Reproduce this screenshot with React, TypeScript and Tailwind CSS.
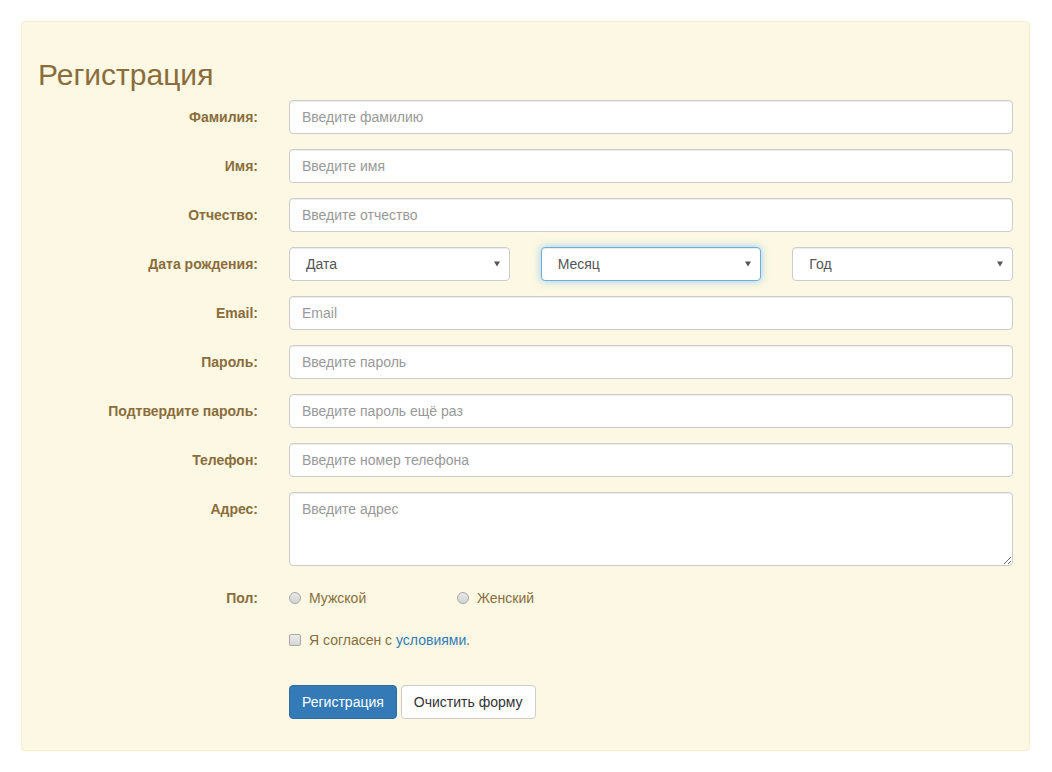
import React from "react";

const font = { fontFamily: '"Liberation Sans", Arial, sans-serif' };

const inputCls =
  "h-[34px] w-full rounded-[4px] border border-[#ccc] bg-white px-[12px] text-[14px] text-[#555] placeholder:text-[#999] shadow-[inset_0_1px_1px_rgba(0,0,0,0.075)] outline-none";

const Row = ({ label, children }: { label: string; children: React.ReactNode }) => (
  <div className="flex items-start gap-[31px]">
    <label className="w-[220px] shrink-0 pt-[7px] text-right text-[14px] font-bold leading-5 text-[#8a6d3b]">
      {label}
    </label>
    <div className="flex-1">{children}</div>
  </div>
);

const Select = ({ text, focused }: { text: string; focused?: boolean }) => (
  <div className="relative">
    <select
      className={
        "h-[34px] w-full appearance-none rounded-[4px] border bg-white pl-[16px] text-[14px] text-[#555] outline-none " +
        (focused
          ? "border-[#66afe9] shadow-[inset_0_1px_1px_rgba(0,0,0,0.075),0_0_8px_rgba(102,175,233,0.6)]"
          : "border-[#ccc] shadow-[inset_0_1px_1px_rgba(0,0,0,0.075)]")
      }
      defaultValue=""
    >
      <option value="">{text}</option>
    </select>
    <svg className="pointer-events-none absolute right-[10px] top-[14px]" width="6" height="6" viewBox="0 0 6 6">
      <path d="M0 0.5h6L3 5.5z" fill="#555" />
    </svg>
  </div>
);

const Radio = ({ text }: { text: string }) => (
  <span className="flex items-center gap-[8px]">
    <span className="h-[12px] w-[12px] rounded-full border border-[#a9a9a9] bg-gradient-to-b from-[#e8e8e8] to-[#d4d4d4]" />
    <span>{text}</span>
  </span>
);

export default function App() {
  return (
    <div className="min-h-screen bg-white pt-[21px] pl-[21px]" style={font}>
      <div className="w-[1009px] rounded-[4px] border border-[#faebcc] bg-[#fcf8e3] px-[16px] pt-[36px] pb-[31px]">
        <h2 className="mb-[9px] text-[30px] leading-[33px] text-[#8a6d3b]">Регистрация</h2>
        <div className="flex flex-col gap-[15px]">
          <Row label="Фамилия:">
            <input className={inputCls} placeholder="Введите фамилию" />
          </Row>
          <Row label="Имя:">
            <input className={inputCls} placeholder="Введите имя" />
          </Row>
          <Row label="Отчество:">
            <input className={inputCls} placeholder="Введите отчество" />
          </Row>
          <Row label="Дата рождения:">
            <div className="grid grid-cols-3 gap-[31px]">
              <Select text="Дата" />
              <Select text="Месяц" focused />
              <Select text="Год" />
            </div>
          </Row>
          <Row label="Email:">
            <input className={inputCls} placeholder="Email" />
          </Row>
          <Row label="Пароль:">
            <input className={inputCls} type="password" placeholder="Введите пароль" />
          </Row>
          <Row label="Подтвердите пароль:">
            <input className={inputCls} type="password" placeholder="Введите пароль ещё раз" />
          </Row>
          <Row label="Телефон:">
            <input className={inputCls} placeholder="Введите номер телефона" />
          </Row>
          <Row label="Адрес:">
            <textarea
              className="block h-[74px] w-full rounded-[4px] border border-[#ccc] bg-white px-[12px] py-[6px] text-[14px] leading-5 text-[#555] placeholder:text-[#999] shadow-[inset_0_1px_1px_rgba(0,0,0,0.075)] outline-none"
              placeholder="Введите адрес"
            />
          </Row>
          <Row label="Пол:">
            <div className="flex pt-[7px] text-[14px] leading-5 text-[#8a6d3b]">
              <div className="w-[168px]">
                <Radio text="Мужской" />
              </div>
              <Radio text="Женский" />
            </div>
          </Row>
          <Row label="">
            <div className="flex items-center gap-[8px] pt-[7px] text-[14px] leading-5 text-[#8a6d3b]">
              <span className="h-[12px] w-[12px] rounded-[2px] border border-[#a9a9a9] bg-gradient-to-b from-[#ececec] to-[#d6d6d6]" />
              <span>
                Я согласен с <a className="text-[#337ab7]">условиями</a>.
              </span>
            </div>
          </Row>
          <Row label="">
            <div className="mt-[20px] flex gap-[4px]">
              <button className="h-[34px] rounded-[4px] border border-[#2e6da4] bg-[#337ab7] px-[12px] text-[14px] text-white">
                Регистрация
              </button>
              <button className="h-[34px] rounded-[4px] border border-[#ccc] bg-white px-[12px] text-[14px] text-[#333]">
                Очистить форму
              </button>
            </div>
          </Row>
        </div>
      </div>
    </div>
  );
}
